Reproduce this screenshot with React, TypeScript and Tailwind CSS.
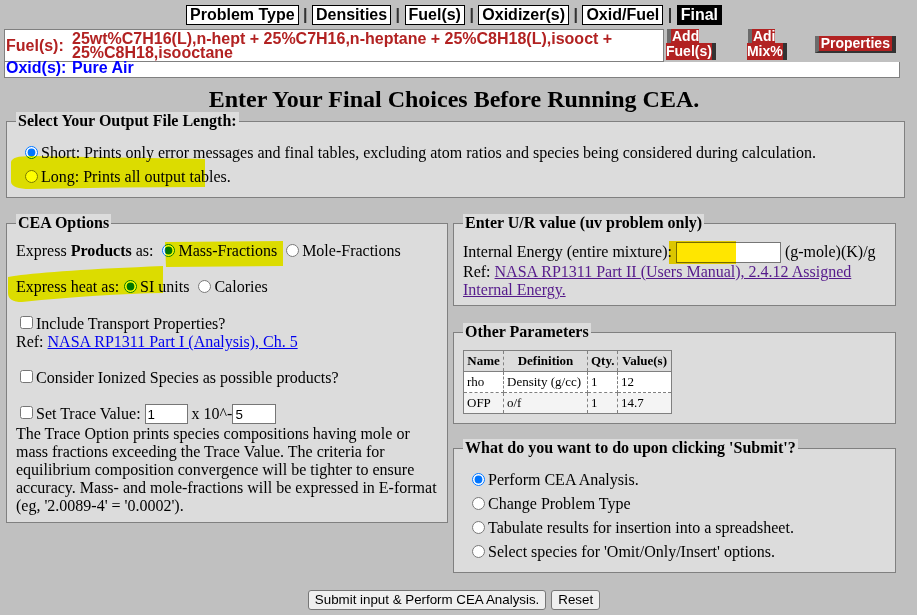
import React from 'react';

const sans = "font-['Liberation_Sans',Arial,sans-serif]";
const radioCls = 'ml-[5px] mr-[3px] align-[-1px]';
const checkCls = 'ml-[4px] mr-[3px] align-baseline';
const legendCls = 'px-[2px] bg-[#dcdcdc] font-bold leading-[18px]';
const fieldsetCls = 'border border-[#808080] bg-[#dcdcdc] px-[9px]';
const textInput = `border border-[#767676] bg-white px-[2px] ${sans} text-[13.33px] leading-[16px] align-baseline`;

const NavItem: React.FC<{ label: string; active?: boolean }> = ({ label, active }) => (
  <span
    className={
      active
        ? 'inline-block border border-black bg-black px-[3px] leading-[18px] text-white'
        : 'inline-block border border-black bg-white px-[3px] leading-[18px] text-black'
    }
  >
    {label}
  </span>
);

const Nav = () => (
  <div className={`h-[29px] pt-[5px] text-center ${sans} text-[16px] font-bold leading-[20px] text-[#333]`}>
    <NavItem label="Problem Type" />
    {' | '}
    <NavItem label="Densities" />
    {' | '}
    <NavItem label="Fuel(s)" />
    {' | '}
    <NavItem label="Oxidizer(s)" />
    {' | '}
    <NavItem label="Oxid/Fuel" />
    {' | '}
    <NavItem label="Final" active />
  </div>
);

// red link buttons that wrap onto two lines
const SplitButton: React.FC<{ top: string; bottom: string }> = ({ top, bottom }) => (
  <div className={`flex flex-col items-start ${sans} text-[14px] font-bold text-white`}>
    <div className="ml-[1px] h-[14px] border-l-4 border-l-[#6b6b6b] bg-[#b22222] pl-[1px] pt-[1px] leading-[13px]">
      {top}
    </div>
    <div className="h-[17px] border-r-4 border-r-[#333] bg-[#b22222] leading-[16px]">{bottom}</div>
  </div>
);

const FuelBlock = () => (
  <div className={`ml-[4px] ${sans} text-[16px] font-bold`}>
    <div className="flex h-[33px]">
      <div className="flex h-[33px] w-[660px] items-center border border-[#808080] bg-white text-[#b22222]">
        <div className="w-[67px] shrink-0 pl-[1px]">Fuel(s):</div>
        <div className="w-[588px] leading-[14px]">
          25wt%C7H16(L),n-hept + 25%C7H16,n-heptane + 25%C8H18(L),isooct + 25%C8H18,isooctane
        </div>
      </div>
      <div className="ml-[2px]">
        <SplitButton top="Add" bottom="Fuel(s)" />
      </div>
      <div className="ml-[31px]">
        <SplitButton top="Adi" bottom="Mix%" />
      </div>
      <div className="ml-[28px] mt-[7px] h-[17px] border-b-2 border-l-4 border-r-4 border-b-[#333] border-l-[#6b6b6b] border-r-[#333] bg-[#b22222] px-[2px] text-[14px] leading-[15px] text-white">
        Properties
      </div>
    </div>
    <div className="flex h-[16px] w-[896px] border-x border-b border-[#808080] bg-white leading-[12px] text-[#0000ff]">
      <div className="w-[67px] shrink-0 pl-[1px]">Oxid(s):</div>
      <div>Pure Air</div>
    </div>
  </div>
);

const OutputLength = () => (
  <fieldset className={`ml-[6px] w-[899px] ${fieldsetCls} pt-[10px] pb-[9px]`}>
    <legend className={legendCls}>Select Your Output File Length:</legend>
    <div className="h-[24px] pl-[4px] leading-[25px]">
      <input type="radio" name="len" defaultChecked className={radioCls} />
      Short: Prints only error messages and final tables, excluding atom ratios and species being considered during
      calculation.
    </div>
    <div className="h-[24px] pl-[4px] leading-[25px]">
      <input type="radio" name="len" className={radioCls} />
      Long: Prints all output tables.
    </div>
  </fieldset>
);

const CeaOptions = () => (
  <fieldset className={`w-[442px] shrink-0 ${fieldsetCls} pt-[10px] pb-[7px]`}>
    <legend className={legendCls}>CEA Options</legend>
    <div className="h-[18px] whitespace-nowrap">
      Express <b>Products</b> as: <input type="radio" name="prod" defaultChecked className={radioCls} />
      Mass-Fractions <input type="radio" name="prod" className={radioCls} />
      Mole-Fractions
    </div>
    <div className="mt-[18px] h-[18px] whitespace-nowrap">
      Express heat as:
      <input type="radio" name="heat" defaultChecked className={radioCls} />
      SI units <input type="radio" name="heat" className={radioCls} />
      Calories
    </div>
    <div className="mt-[19px] h-[18px]">
      <input type="checkbox" className={checkCls} />
      Include Transport Properties?
    </div>
    <div className="h-[18px]">
      Ref:{' '}
      <a href="#" className="text-[#0000ee] underline">
        NASA RP1311 Part I (Analysis), Ch. 5
      </a>
    </div>
    <div className="mt-[18px] h-[18px]">
      <input type="checkbox" className={checkCls} />
      Consider Ionized Species as possible products?
    </div>
    <div className="mt-[17px] h-[21px] whitespace-nowrap">
      <input type="checkbox" className={checkCls} />
      Set Trace Value: <input type="text" defaultValue="1" className={`h-[20px] w-[43px] ${textInput}`} /> x 10^-
      <input type="text" defaultValue="5" className={`h-[20px] w-[44px] ${textInput}`} />
    </div>
    <p>
      The Trace Option prints species compositions having mole or mass fractions exceeding the Trace Value. The
      criteria for equilibrium composition convergence will be tighter to ensure accuracy. Mass- and mole-fractions
      will be expressed in E-format (eg, '2.0089-4' = '0.0002').
    </p>
  </fieldset>
);

const UrValue = () => (
  <fieldset className={`${fieldsetCls} pt-[10px] pb-[6px]`}>
    <legend className={legendCls}>Enter U/R value (uv problem only)</legend>
    <div className="h-[21px] whitespace-nowrap">
      Internal Energy (entire mixture): <input type="text" className={`h-[21px] w-[105px] ${textInput}`} />{' '}
      (g-mole)(K)/g
    </div>
    <div>
      Ref:{' '}
      <a href="#" className="text-[#551a8b] underline">
        NASA RP1311 Part II (Users Manual), 2.4.12 Assigned Internal Energy.
      </a>
    </div>
  </fieldset>
);

const th = 'border border-dashed border-[#808080] [border-bottom-style:solid] px-[3px] py-[2px] font-bold';
const td = 'border border-dashed border-[#808080] px-[3px] py-[2px] text-left font-normal';

const params = [
  { name: 'rho', def: 'Density (g/cc)', qty: '1', value: '12' },
  { name: 'OFP', def: 'o/f', qty: '1', value: '14.7' },
];

const OtherParameters = () => (
  <fieldset className={`mt-[17px] ${fieldsetCls} pt-[9px] pb-[9px]`}>
    <legend className={legendCls}>Other Parameters</legend>
    <table className="w-[208px] table-fixed border-collapse border border-[#808080] text-[13px] leading-[16px]">
      <thead>
        <tr className="bg-[#dcdcdc]">
          <th className={`w-[40px] ${th}`}>Name</th>
          <th className={`w-[84px] ${th}`}>Definition</th>
          <th className={`w-[30px] ${th}`}>Qty.</th>
          <th className={`w-[54px] ${th}`}>Value(s)</th>
        </tr>
      </thead>
      <tbody>
        {params.map((p, i) => (
          <tr key={p.name} className={i === 0 ? 'bg-white' : 'bg-[#f4f4f4]'}>
            <td className={td}>{p.name}</td>
            <td className={`${td} whitespace-nowrap`}>{p.def}</td>
            <td className={td}>{p.qty}</td>
            <td className={td}>{p.value}</td>
          </tr>
        ))}
      </tbody>
    </table>
  </fieldset>
);

const submitOptions = [
  'Perform CEA Analysis.',
  'Change Problem Type',
  'Tabulate results for insertion into a spreadsheet.',
  "Select species for 'Omit/Only/Insert' options.",
];

const SubmitAction = () => (
  <fieldset className={`mt-[15px] ${fieldsetCls} pt-[11px] pb-[8px]`}>
    <legend className={legendCls}>What do you want to do upon clicking 'Submit'?</legend>
    {submitOptions.map((o, i) => (
      <div key={o} className="h-[24px] pl-[4px] leading-[24px]">
        <input type="radio" name="action" defaultChecked={i === 0} className={radioCls} />
        {o}
      </div>
    ))}
  </fieldset>
);

const btn = `h-[20px] rounded-[3px] border border-[#767676] bg-[#efefef] px-[6px] ${sans} text-[13.33px] leading-[16px] text-black`;

// marker strokes drawn over the page
const Highlights = () => (
  <svg
    className="pointer-events-none absolute left-0 top-0 mix-blend-multiply"
    width={917}
    height={615}
    viewBox="0 0 917 615"
  >
    <path d="M11,162 Q12,156 30,156 L205,159 L205,187 Q120,187 30,189 Q12,189 11,182 Z" fill="#ffff00" />
    <path d="M165,242 L283,241 L283,266 L166,267 Z" fill="#ffff00" />
    <path d="M8,277 Q40,271 163,266 L163,293 Q100,294 22,302 Q8,302 8,293 Z" fill="#ffff00" />
    <rect x={669} y={241} width={67} height={23} fill="#ffe600" />
  </svg>
);

export default function App() {
  return (
    <div className="relative h-[615px] w-[917px] overflow-hidden bg-[#c0c0c0] font-['Liberation_Serif',serif] text-[16px] leading-[18px] text-black">
      <div className="w-[908px]">
        <Nav />
        <FuelBlock />
        <h1 className="mt-[8px] h-[26px] text-center text-[24px] font-bold leading-[26px]">
          Enter Your Final Choices Before Running CEA.
        </h1>
        <OutputLength />
        <div className="ml-[6px] mt-[16px] flex items-start gap-[5px]">
          <CeaOptions />
          <div className="flex w-[443px] shrink-0 flex-col">
            <UrValue />
            <OtherParameters />
            <SubmitAction />
          </div>
        </div>
        <div className="mt-[17px] flex justify-center gap-[5px]">
          <button className={btn}>Submit input &amp; Perform CEA Analysis.</button>
          <button className={btn}>Reset</button>
        </div>
      </div>
      <Highlights />
    </div>
  );
}
